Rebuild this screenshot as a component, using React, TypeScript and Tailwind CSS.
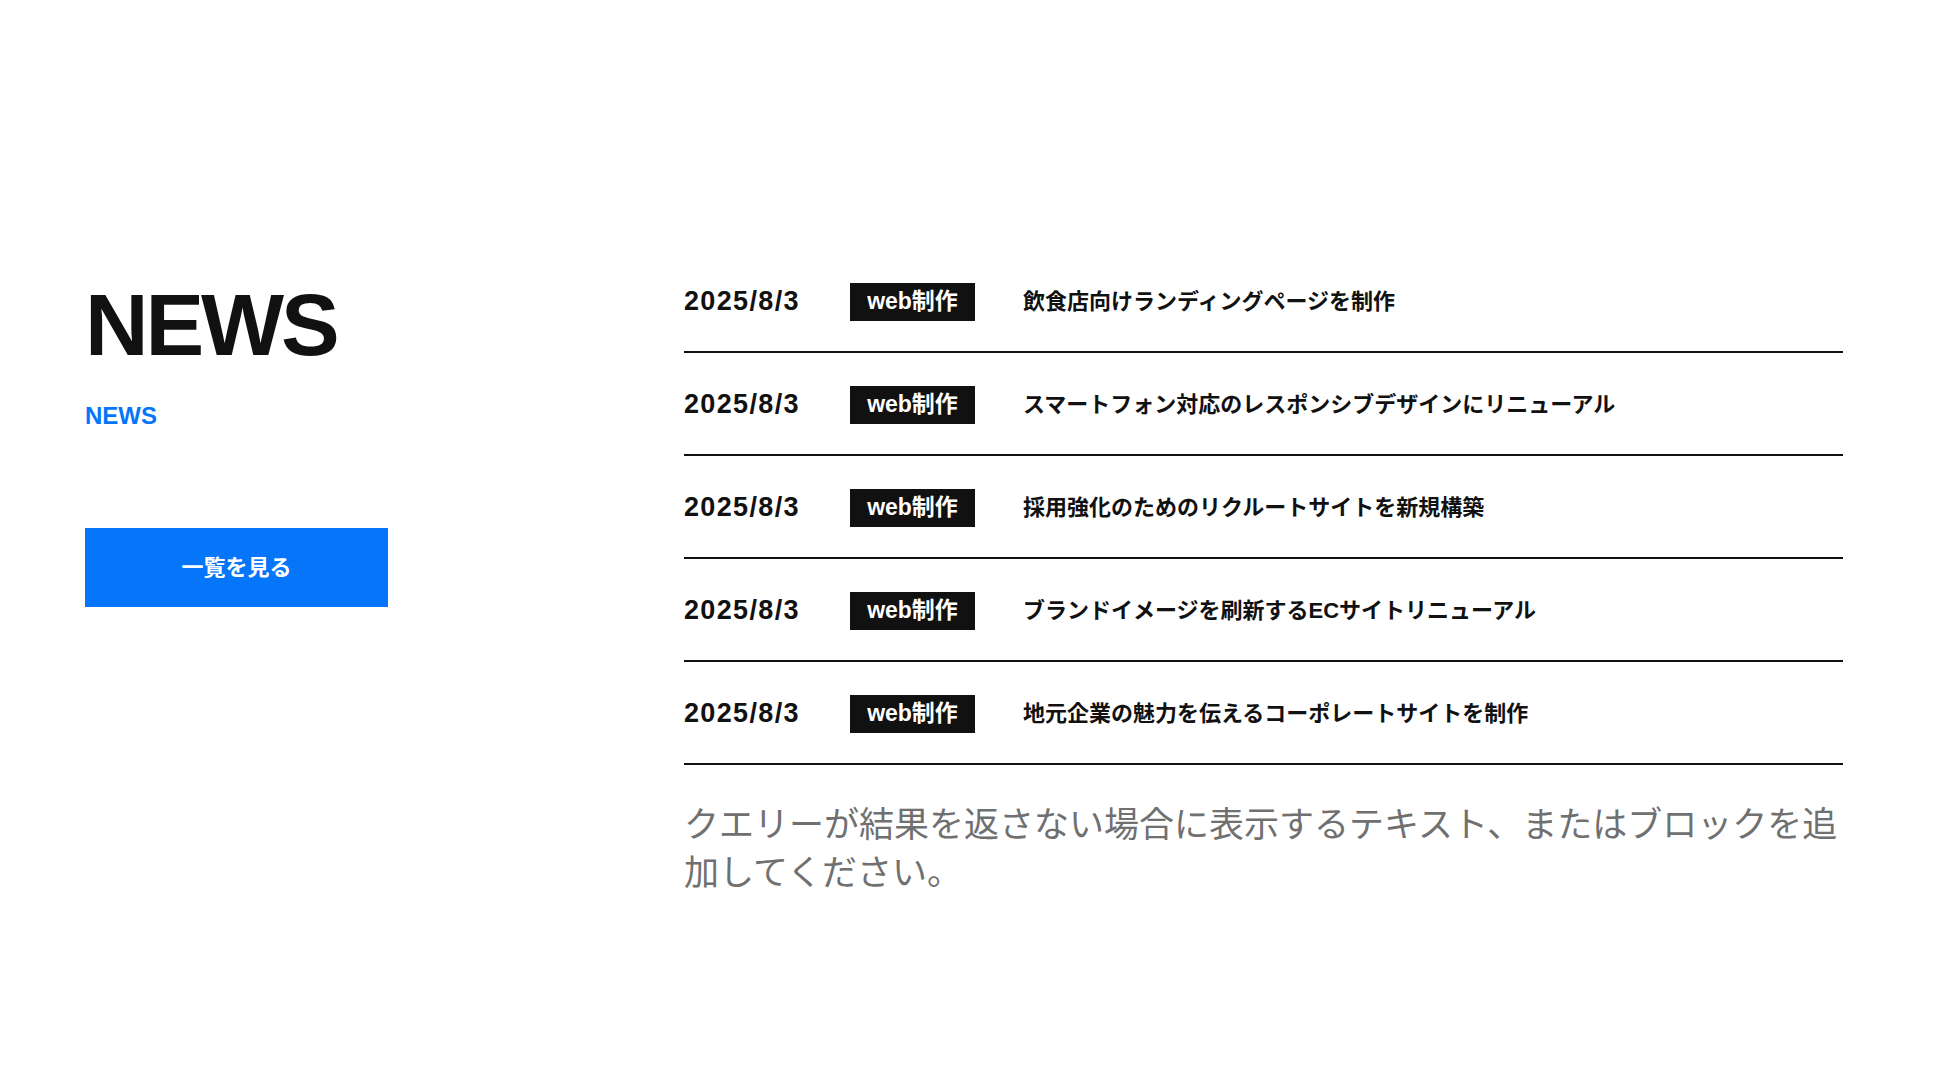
import React from "react";

const font = { fontFamily: '"Liberation Sans", "Noto Sans CJK JP", sans-serif' };

const news = [
  { date: "2025/8/3", cat: "web制作", title: "飲食店向けランディングページを制作" },
  { date: "2025/8/3", cat: "web制作", title: "スマートフォン対応のレスポンシブデザインにリニューアル" },
  { date: "2025/8/3", cat: "web制作", title: "採用強化のためのリクルートサイトを新規構築" },
  { date: "2025/8/3", cat: "web制作", title: "ブランドイメージを刷新するECサイトリニューアル" },
  { date: "2025/8/3", cat: "web制作", title: "地元企業の魅力を伝えるコーポレートサイトを制作" },
];

function NewsRow({ date, cat, title }: { date: string; cat: string; title: string }) {
  return (
    <li className="flex h-[103px] items-center border-b-2 border-[#111] pt-[2px]">
      <span className="w-[166px] shrink-0 text-[27px] font-bold leading-none tracking-[0.05em] text-[#111]">
        {date}
      </span>
      <span className="flex h-[38px] w-[125px] shrink-0 items-center justify-center bg-[#111] text-[23px] font-bold leading-none text-white">
        {cat}
      </span>
      <a href="#" className="ml-[48px] text-[22px] font-bold leading-none text-[#111]">
        {title}
      </a>
    </li>
  );
}

export default function App() {
  return (
    <div className="min-h-[1090px] w-full bg-white" style={font}>
      <section className="flex pl-[85px] pr-[97px] pt-[250px]">
        {/* 左: 見出し + ボタン */}
        <div className="w-[599px] shrink-0 pt-[31px]">
          <h2 className="text-[88px] font-bold leading-none tracking-[-0.035em] text-[#111]">NEWS</h2>
          <p className="mt-[35px] text-[24px] font-bold leading-none text-[#0575fa]">NEWS</p>
          <a
            href="#"
            className="mt-[100px] flex h-[79px] w-[303px] items-center justify-center bg-[#0575fa] text-[22px] font-bold text-white"
          >
            一覧を見る
          </a>
        </div>

        {/* 右: ニュース一覧 */}
        <div className="min-w-0 flex-1">
          <ul>
            {news.map((n, i) => (
              <NewsRow key={i} {...n} />
            ))}
          </ul>
          <p className="mt-9 text-[35px] leading-[48px] text-[#707070]">
            クエリーが結果を返さない場合に表示するテキスト、またはブロックを追加してください。
          </p>
        </div>
      </section>
    </div>
  );
}
